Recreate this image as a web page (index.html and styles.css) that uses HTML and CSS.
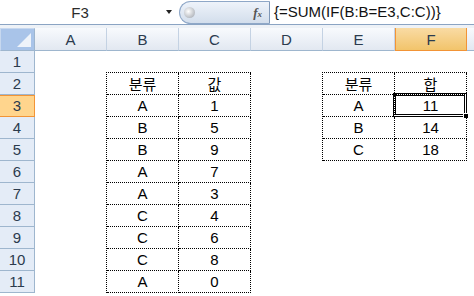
FILE: index.html
```html
<!DOCTYPE html>
<html lang="ko">
<head>
    <meta charset="UTF-8">
    <title>Sheet1</title>
    <link rel="stylesheet" href="styles.css">
</head>
<body>

<div class="formula-bar">
    <div class="name-box">
        <span class="cell-ref">F3</span>
        <span class="drop-arrow"></span>
    </div>
    <div class="fx-pill">
        <span class="knob"></span>
        <span class="fx">f<sub>x</sub></span>
    </div>
    <div class="formula">{=SUM(IF(B:B=E3,C:C))}</div>
</div>
<div class="band"></div>

<div class="sheet">
    <!-- column headers -->
    <div class="corner"><span class="corner-tri"></span></div>
    <div class="col-head">A</div>
    <div class="col-head">B</div>
    <div class="col-head">C</div>
    <div class="col-head">D</div>
    <div class="col-head">E</div>
    <div class="col-head active">F</div>
    <div class="col-head rest"></div>

    <!-- row headers -->
    <div class="row-head r1">1</div>
    <div class="row-head r2">2</div>
    <div class="row-head r3 active">3</div>
    <div class="row-head r4">4</div>
    <div class="row-head r5">5</div>
    <div class="row-head r6">6</div>
    <div class="row-head r7">7</div>
    <div class="row-head r8">8</div>
    <div class="row-head r9">9</div>
    <div class="row-head r10">10</div>
    <div class="row-head r11">11</div>

    <!-- B2:C11 -->
    <div class="data data-left">
        <div class="cell">분류</div><div class="cell">값</div>
        <div class="cell">A</div><div class="cell">1</div>
        <div class="cell">B</div><div class="cell">5</div>
        <div class="cell">B</div><div class="cell">9</div>
        <div class="cell">A</div><div class="cell">7</div>
        <div class="cell">A</div><div class="cell">3</div>
        <div class="cell">C</div><div class="cell">4</div>
        <div class="cell">C</div><div class="cell">6</div>
        <div class="cell">C</div><div class="cell">8</div>
        <div class="cell">A</div><div class="cell">0</div>
    </div>

    <!-- E2:F5 -->
    <div class="data data-right">
        <div class="cell">분류</div><div class="cell">합</div>
        <div class="cell">A</div><div class="cell selected">11<span class="sel-frame"></span><span class="fill-handle"></span></div>
        <div class="cell">B</div><div class="cell">14</div>
        <div class="cell">C</div><div class="cell">18</div>
    </div>
</div>

</body>
</html>
```

FILE: styles.css
```css
* {
    box-sizing: border-box;
}
body {
    margin: 0;
    width: 474px;
    height: 296px;
    overflow: hidden;
    background: #fff;
    font-family: "Liberation Sans", "Noto Sans CJK KR", sans-serif;
    font-size: 15px;
    color: #000;
}

/* formula bar */
.formula-bar {
    display: flex;
    height: 25px;
    border-bottom: 1px solid #8ba4c3;
    background: #fff;
}
.name-box {
    width: 179px;
    display: flex;
    align-items: center;
    position: relative;
}
.cell-ref {
    width: 160px;
    text-align: center;
    color: #2b2b2b;
}
.drop-arrow {
    margin-left: 6px;
    width: 0;
    height: 0;
    border-left: 3px solid transparent;
    border-right: 3px solid transparent;
    border-top: 4px solid #222;
}
.fx-pill {
    width: 91px;
    height: 23px;
    margin-top: 1px;
    display: flex;
    align-items: center;
    justify-content: space-between;
    padding: 0 7px 0 4px;
    border: 1px solid #8ea7c7;
    border-right: 1px solid #7f98b8;
    border-radius: 12px 0 0 12px;
    background: linear-gradient(#eef3fa, #d3deec);
}
.knob {
    width: 11px;
    height: 11px;
    border-radius: 50%;
    background: radial-gradient(circle at 40% 40%, #ffffff, #b8bcc2 70%, #9a9fa6);
}
.fx {
    font-family: "Liberation Serif", serif;
    font-style: italic;
    font-weight: bold;
    font-size: 13px;
    color: #555;
}
.fx sub {
    font-size: 9px;
    vertical-align: 0;
}
.formula {
    flex: 1;
    padding-left: 4px;
    line-height: 23px;
    color: #111;
}
.band {
    height: 3px;
    background: #eef2f7;
}

/* sheet */
.sheet {
    display: grid;
    grid-template-columns: 35px repeat(6, 72px) 1fr;
    grid-template-rows: 23px repeat(11, 22px) 1fr;
    height: 268px;
}
.corner {
    grid-column: 1;
    grid-row: 1;
    background: #a9c4e9;
    border: 1px solid #c7d8ef;
    border-right-color: #9eb6ce;
    border-bottom-color: #9eb6ce;
    position: relative;
}
.corner-tri {
    position: absolute;
    right: 3px;
    bottom: 3px;
    width: 0;
    height: 0;
    border-left: 14px solid transparent;
    border-bottom: 14px solid #eef3fa;
}
.col-head {
    grid-row: 1;
    display: flex;
    align-items: center;
    justify-content: center;
    border-right: 1px solid #c4d2e3;
    border-bottom: 1px solid #9eb6ce;
    background: linear-gradient(#f8fafd, #e2e8f1);
    color: #2b3b4e;
}
.col-head.active {
    background: linear-gradient(#f9dba4, #f2c46b);
    border: 1px solid #f29436;
    border-top: none;
}
.col-head.rest {
    border-right: none;
}
.row-head {
    grid-column: 1;
    display: flex;
    align-items: center;
    justify-content: center;
    background: #e4ecf7;
    border-right: 1px solid #9eb6ce;
    border-bottom: 1px solid #9eb6ce;
    color: #2b3b4e;
}
.row-head.active {
    background: #ffd58d;
    border-right-color: #f29436;
    border-bottom: 1px solid #f29436;
    box-shadow: inset 0 1px 0 #f29436;
}
.r1 { grid-row: 2; }
.r2 { grid-row: 3; }
.r3 { grid-row: 4; }
.r4 { grid-row: 5; }
.r5 { grid-row: 6; }
.r6 { grid-row: 7; }
.r7 { grid-row: 8; }
.r8 { grid-row: 9; }
.r9 { grid-row: 10; }
.r10 { grid-row: 11; }
.r11 { grid-row: 12; }

/* data ranges */
.data {
    display: grid;
    grid-template-columns: 72px 72px;
    grid-auto-rows: 22px;
    margin: -1px 0 0 -1px;
    border-top: 1px dotted #000;
    border-left: 1px dotted #000;
    align-self: start;
    justify-self: start;
}
.data-left {
    grid-column: 3 / 5;
    grid-row: 3 / 13;
}
.data-right {
    grid-column: 6 / 8;
    grid-row: 3 / 7;
}
.cell {
    display: flex;
    align-items: center;
    justify-content: center;
    border-right: 1px dotted #000;
    border-bottom: 1px dotted #000;
    position: relative;
}
.sel-frame {
    position: absolute;
    left: -2px;
    top: -2px;
    right: -1px;
    bottom: -1px;
    border: 3px double #000;
}
.fill-handle {
    position: absolute;
    right: -3px;
    bottom: -3px;
    width: 6px;
    height: 6px;
    background: #000;
    border: 1px solid #fff;
}
```
